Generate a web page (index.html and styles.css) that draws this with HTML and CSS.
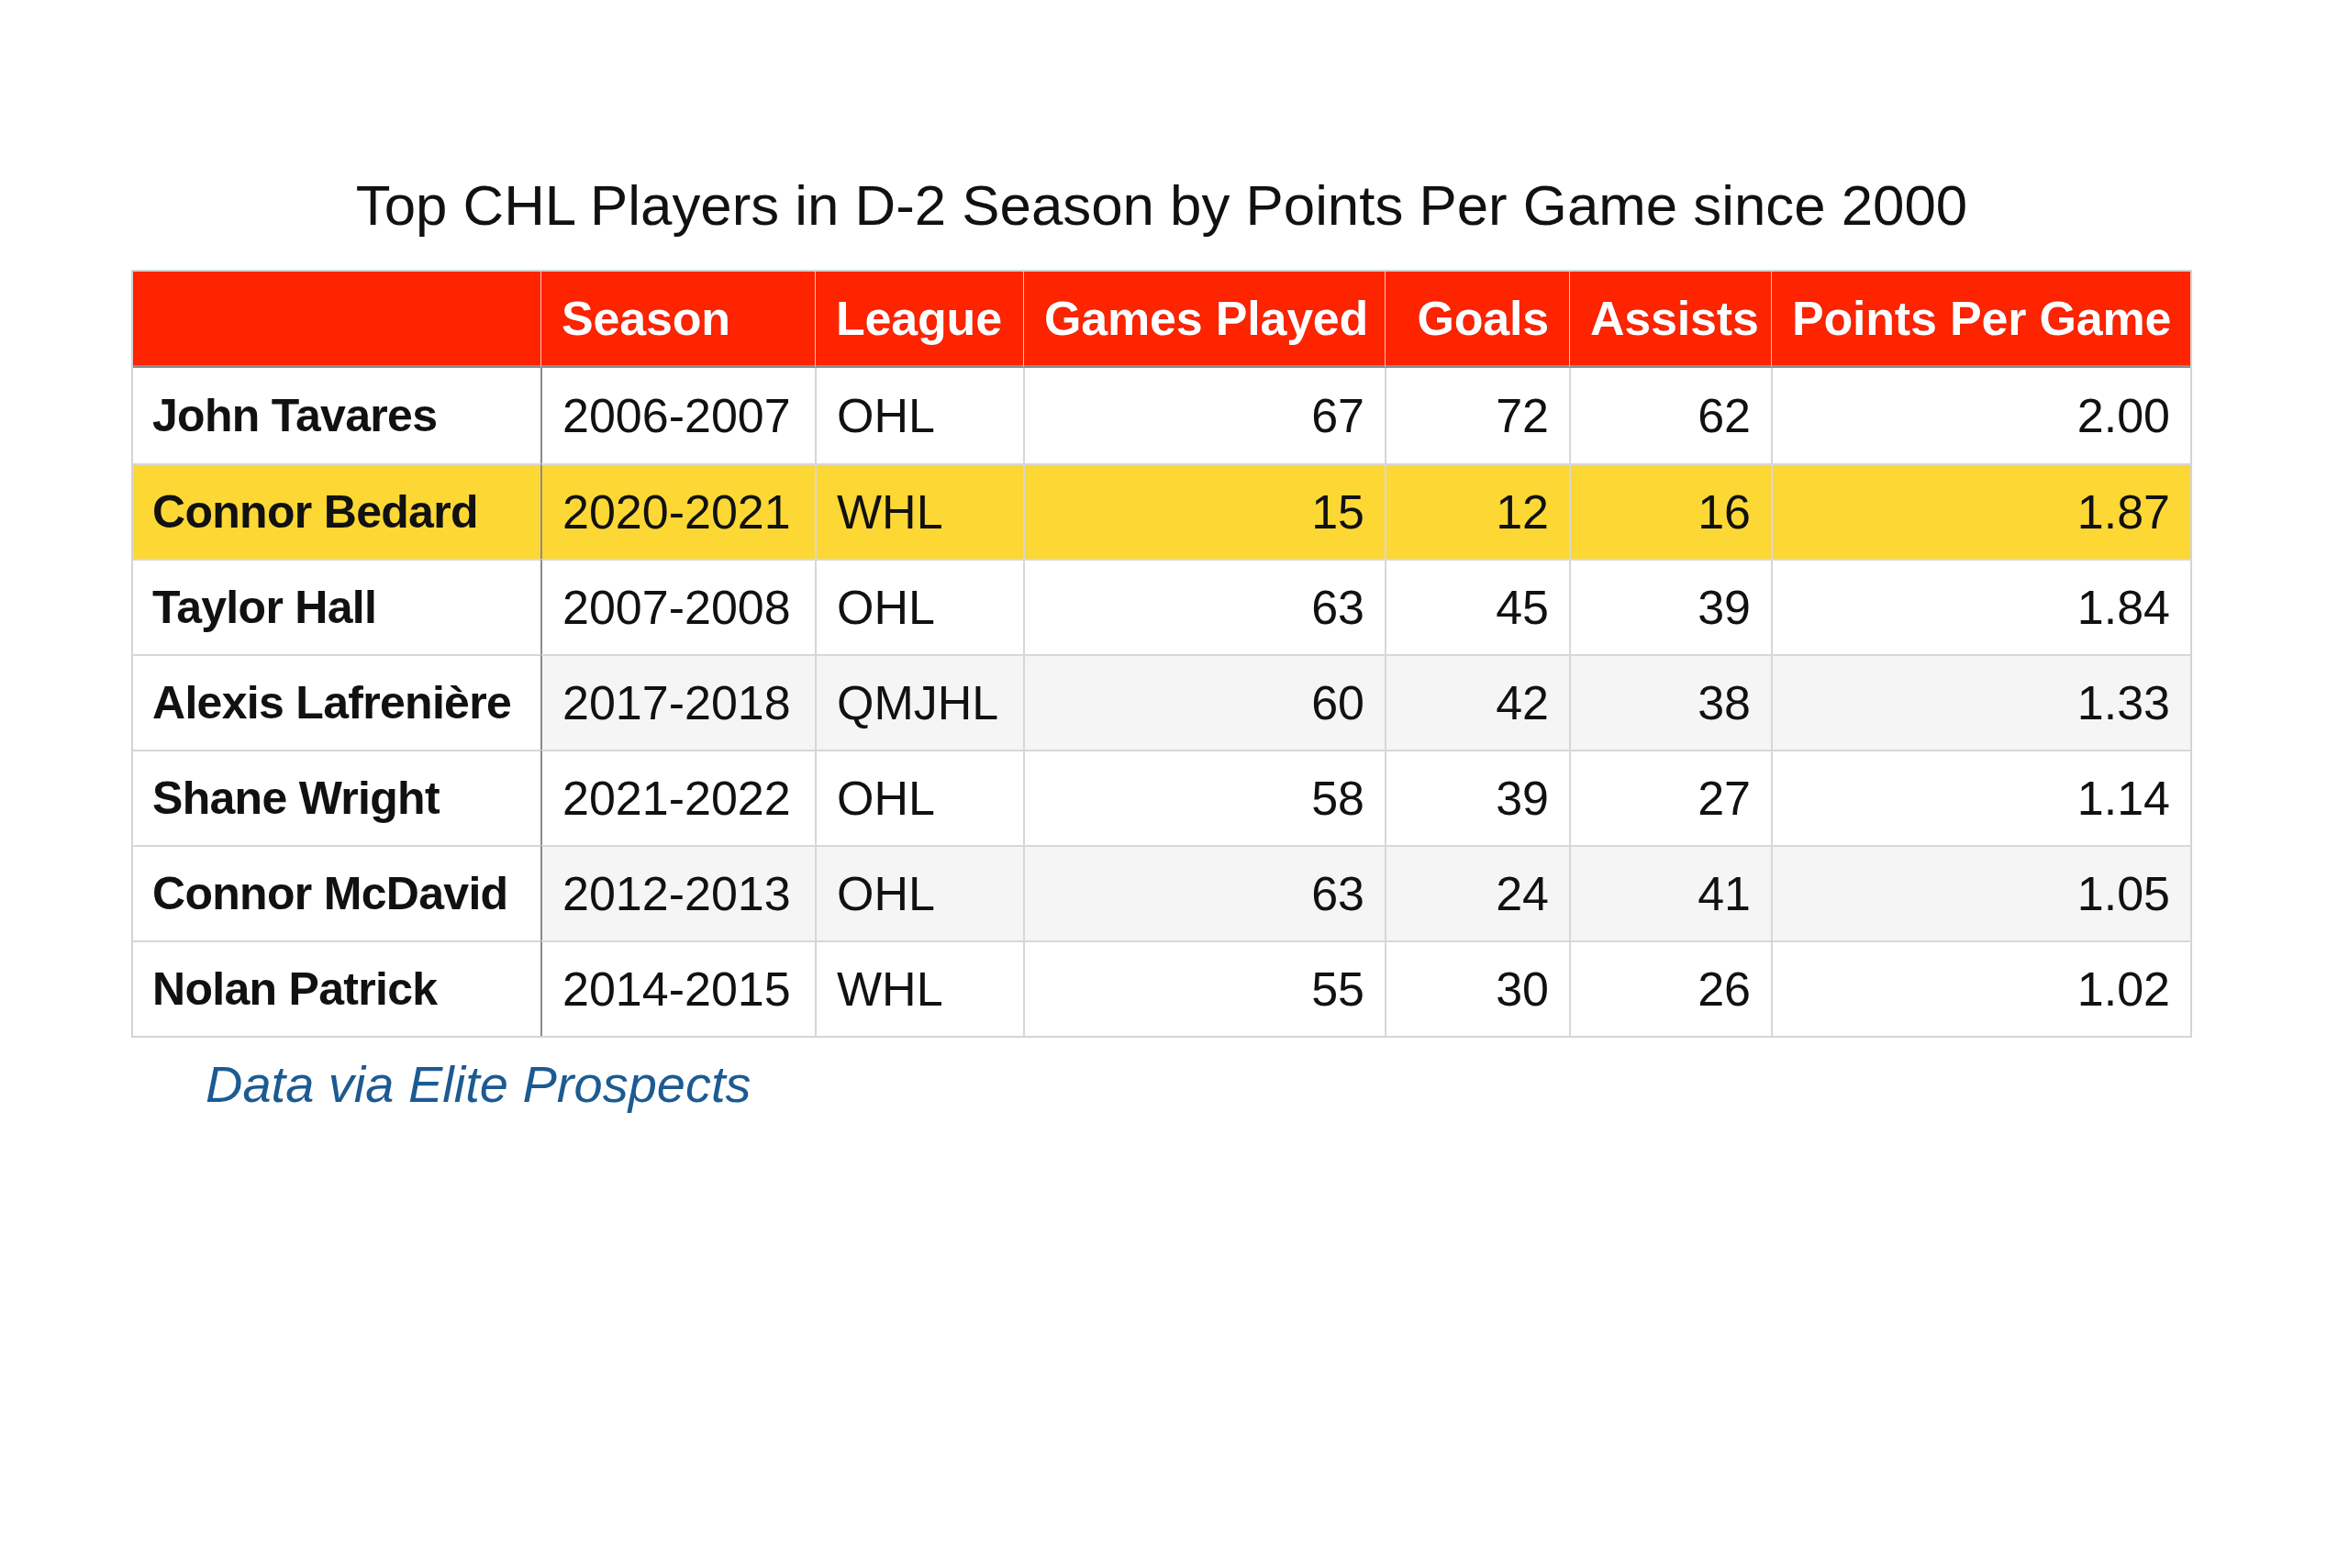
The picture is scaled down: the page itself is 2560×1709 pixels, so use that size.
FILE: index.html
```html
<!DOCTYPE html>
<html lang="en">
<head>
<meta charset="utf-8">
<title>Top CHL Players in D-2 Season by Points Per Game since 2000</title>
<link rel="stylesheet" href="styles.css">
</head>
<body>
<main class="page">
  <h1 class="title">Top CHL Players in D-2 Season by Points Per Game since 2000</h1>
  <table class="stats">
    <colgroup>
      <col class="c-name"><col class="c-season"><col class="c-league"><col class="c-gp"><col class="c-goals"><col class="c-assists"><col class="c-ppg">
    </colgroup>
    <thead>
      <tr>
        <th class="first"></th>
        <th>Season</th>
        <th>League</th>
        <th class="num">Games Played</th>
        <th class="num">Goals</th>
        <th class="num">Assists</th>
        <th class="num">Points Per Game</th>
      </tr>
    </thead>
    <tbody>
      <tr class="top">
        <td class="name">John Tavares</td><td class="season">2006-2007</td><td>OHL</td><td class="num">67</td><td class="num">72</td><td class="num">62</td><td class="num">2.00</td>
      </tr>
      <tr class="hl">
        <td class="name">Connor Bedard</td><td class="season">2020-2021</td><td>WHL</td><td class="num">15</td><td class="num">12</td><td class="num">16</td><td class="num">1.87</td>
      </tr>
      <tr>
        <td class="name">Taylor Hall</td><td class="season">2007-2008</td><td>OHL</td><td class="num">63</td><td class="num">45</td><td class="num">39</td><td class="num">1.84</td>
      </tr>
      <tr class="alt">
        <td class="name">Alexis Lafrenière</td><td class="season">2017-2018</td><td>QMJHL</td><td class="num">60</td><td class="num">42</td><td class="num">38</td><td class="num">1.33</td>
      </tr>
      <tr>
        <td class="name">Shane Wright</td><td class="season">2021-2022</td><td>OHL</td><td class="num">58</td><td class="num">39</td><td class="num">27</td><td class="num">1.14</td>
      </tr>
      <tr class="alt">
        <td class="name">Connor McDavid</td><td class="season">2012-2013</td><td>OHL</td><td class="num">63</td><td class="num">24</td><td class="num">41</td><td class="num">1.05</td>
      </tr>
      <tr>
        <td class="name">Nolan Patrick</td><td class="season">2014-2015</td><td>WHL</td><td class="num">55</td><td class="num">30</td><td class="num">26</td><td class="num">1.02</td>
      </tr>
    </tbody>
  </table>
  <p class="source">Data via Elite Prospects</p>
</main>
</body>
</html>
```

FILE: styles.css
```css
html, body {
  margin: 0;
  padding: 0;
  background: #ffffff;
}

body {
  font-family: "Liberation Sans", Arial, Helvetica, sans-serif;
  color: #111111;
}

.page {
  width: 2246px;
  margin-left: 143px;
  padding-top: 193px;
}

.title {
  margin: 0 0 40px 0;
  font-size: 61.8px;
  line-height: 61px;
  font-weight: normal;
  text-align: center;
  color: #111111;
}

.stats {
  width: 2246px;
  table-layout: fixed;
  border-collapse: separate;
  border-spacing: 0;
  border: 2px solid #d4d4d4;
  font-size: 52px;
}

.c-name { width: 444px; }
.c-season { width: 299px; }
.c-league { width: 227px; }
.c-gp { width: 394px; }
.c-goals { width: 201px; }
.c-assists { width: 220px; }
.c-ppg { width: 457px; }

.stats th {
  background: #fe2400;
  color: #ffffff;
  font-weight: bold;
  font-size: 52px;
  letter-spacing: -0.2px;
  line-height: 60px;
  padding: 21px 22px;
  text-align: left;
  white-space: nowrap;
  border-left: 1px solid #ffc4bb;
  border-bottom: 3px solid #8c8c8c;
  text-shadow: 0 0 1px rgba(90, 0, 0, 0.5);
}

.stats th.first {
  border-left: none;
}

.stats th.num {
  text-align: right;
}

.stats td {
  line-height: 60px;
  padding: 21px 22px;
  white-space: nowrap;
  border-top: 2px solid #d7d7d7;
  border-left: 2px solid #d7d7d7;
  background: #ffffff;
}

.stats tr.top td {
  border-top: none;
  padding-top: 22px;
  padding-bottom: 22px;
}

.stats td.name {
  border-left: none;
  padding-left: 21px;
  font-size: 50px;
  font-weight: bold;
  letter-spacing: -0.7px;
}

.stats td.season {
  border-left: 2px solid #8a8a8a;
}

.stats td.num {
  text-align: right;
}

.stats tr.alt td {
  background: #f5f5f5;
}

.stats tr.alt td.name {
  background: #ffffff;
}

.stats tr.hl td {
  background: #fdd835;
}

.source {
  margin: 20px 0 0 81px;
  font-size: 56px;
  line-height: 62px;
  font-style: italic;
  color: #1c5a92;
}
```
